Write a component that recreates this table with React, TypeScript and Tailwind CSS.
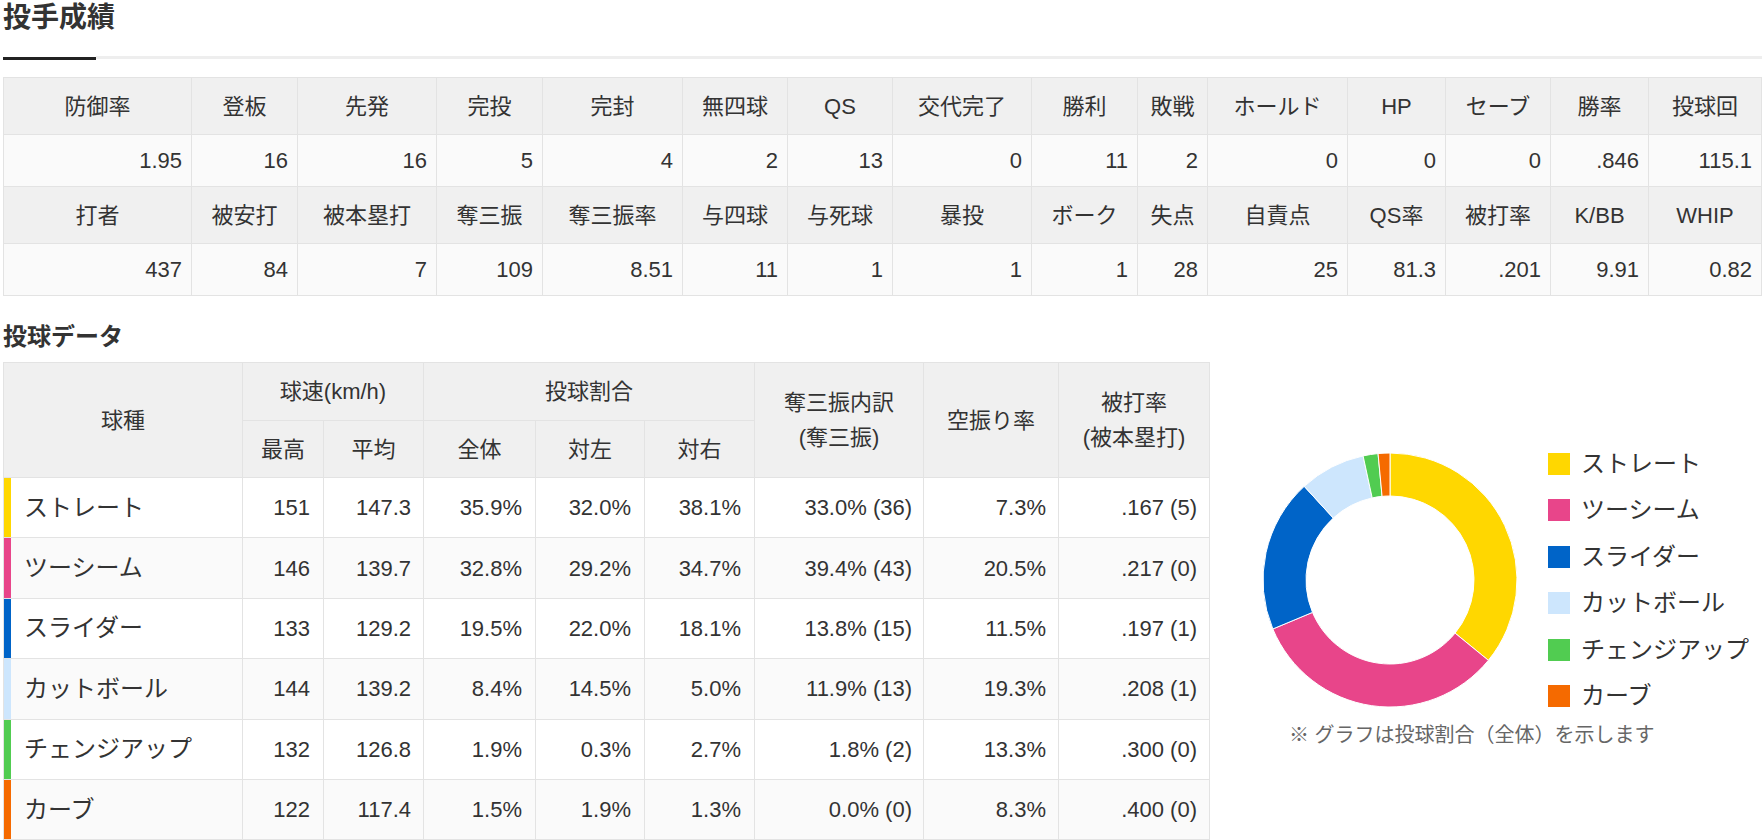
import React from "react";

type Pitch = {
  name: string;
  color: string;
  bar: string;
  max: string;
  avg: string;
  all: string;
  left: string;
  right: string;
  k: string;
  swing: string;
  avgAgainst: string;
  pct: number;
};

const pitches: Pitch[] = [
  { name: "ストレート", color: "#ffd700", bar: "shadow-[inset_7px_0_0_#ffd700]", max: "151", avg: "147.3", all: "35.9%", left: "32.0%", right: "38.1%", k: "33.0% (36)", swing: "7.3%", avgAgainst: ".167 (5)", pct: 35.9 },
  { name: "ツーシーム", color: "#e8458a", bar: "shadow-[inset_7px_0_0_#e8458a]", max: "146", avg: "139.7", all: "32.8%", left: "29.2%", right: "34.7%", k: "39.4% (43)", swing: "20.5%", avgAgainst: ".217 (0)", pct: 32.8 },
  { name: "スライダー", color: "#0064c8", bar: "shadow-[inset_7px_0_0_#0064c8]", max: "133", avg: "129.2", all: "19.5%", left: "22.0%", right: "18.1%", k: "13.8% (15)", swing: "11.5%", avgAgainst: ".197 (1)", pct: 19.5 },
  { name: "カットボール", color: "#cde6fd", bar: "shadow-[inset_7px_0_0_#cde6fd]", max: "144", avg: "139.2", all: "8.4%", left: "14.5%", right: "5.0%", k: "11.9% (13)", swing: "19.3%", avgAgainst: ".208 (1)", pct: 8.4 },
  { name: "チェンジアップ", color: "#51cc51", bar: "shadow-[inset_7px_0_0_#51cc51]", max: "132", avg: "126.8", all: "1.9%", left: "0.3%", right: "2.7%", k: "1.8% (2)", swing: "13.3%", avgAgainst: ".300 (0)", pct: 1.9 },
  { name: "カーブ", color: "#f56a00", bar: "shadow-[inset_7px_0_0_#f56a00]", max: "122", avg: "117.4", all: "1.5%", left: "1.9%", right: "1.3%", k: "0.0% (0)", swing: "8.3%", avgAgainst: ".400 (0)", pct: 1.5 },
];

const statCols = ["w-[188px]", "w-[106px]", "w-[139px]", "w-[106px]", "w-[140px]", "w-[105px]", "w-[105px]", "w-[139px]", "w-[106px]", "w-[70px]", "w-[140px]", "w-[98px]", "w-[105px]", "w-[98px]", "w-[113px]"];

const statRows: { labels: string[]; values: string[] }[] = [
  {
    labels: ["防御率", "登板", "先発", "完投", "完封", "無四球", "QS", "交代完了", "勝利", "敗戦", "ホールド", "HP", "セーブ", "勝率", "投球回"],
    values: ["1.95", "16", "16", "5", "4", "2", "13", "0", "11", "2", "0", "0", "0", ".846", "115.1"],
  },
  {
    labels: ["打者", "被安打", "被本塁打", "奪三振", "奪三振率", "与四球", "与死球", "暴投", "ボーク", "失点", "自責点", "QS率", "被打率", "K/BB", "WHIP"],
    values: ["437", "84", "7", "109", "8.51", "11", "1", "1", "1", "28", "25", "81.3", ".201", "9.91", "0.82"],
  },
];

function Donut() {
  const cx = 128;
  const cy = 128;
  const r1 = 127;
  const r0 = 84;
  let acc = 0;
  const pt = (f: number, r: number) => {
    const a = f * Math.PI * 2 - Math.PI / 2;
    return `${(cx + r * Math.cos(a)).toFixed(2)} ${(cy + r * Math.sin(a)).toFixed(2)}`;
  };
  return (
    <svg width="256" height="256" viewBox="0 0 256 256">
      {pitches.map((p) => {
        const s = acc / 100;
        acc += p.pct;
        const e = acc / 100;
        const large = e - s > 0.5 ? 1 : 0;
        const d = `M ${pt(s, r1)} A ${r1} ${r1} 0 ${large} 1 ${pt(e, r1)} L ${pt(e, r0)} A ${r0} ${r0} 0 ${large} 0 ${pt(s, r0)} Z`;
        return <path key={p.name} d={d} fill={p.color} stroke="#fff" strokeWidth="1" />;
      })}
    </svg>
  );
}

export default function App() {
  const th = "border border-[#e3e3e3] bg-[#f0f0f0] font-normal text-center";
  const td = "border border-[#e3e3e3] text-right";

  return (
    <div className="min-h-screen bg-white pl-[3px] text-[#333] font-['Liberation_Sans','Noto_Sans_CJK_JP',sans-serif]">
      <h2 className="text-[28px] leading-[36px] font-bold">投手成績</h2>
      <div className="mt-[20px] flex items-start">
        <div className="h-[3px] w-[93px] translate-y-[1px] bg-[#222]" />
        <div className="h-[3px] flex-1 bg-[#eeeeee]" />
      </div>

      <table className="mt-[18px] w-[1758px] table-fixed border-collapse text-[22px]">
        <colgroup>
          {statCols.map((c, i) => (
            <col key={i} className={c} />
          ))}
        </colgroup>
        <tbody>
          {statRows.map((row, ri) => (
            <React.Fragment key={ri}>
              <tr className="h-[57px]">
                {row.labels.map((l) => (
                  <th key={l} className={th}>
                    {l}
                  </th>
                ))}
              </tr>
              <tr className="h-[52px] bg-[#fafafa]">
                {row.values.map((v, i) => (
                  <td key={i} className={`${td} pr-[9px]`}>
                    {v}
                  </td>
                ))}
              </tr>
            </React.Fragment>
          ))}
        </tbody>
      </table>

      <h3 className="mt-[25px] text-[24px] leading-[32px] font-bold">投球データ</h3>

      <div className="mt-[9px] flex items-start">
        <table className="w-[1206px] shrink-0 table-fixed border-collapse text-[22px]">
          <colgroup>
            <col className="w-[239px]" />
            <col className="w-[81px]" />
            <col className="w-[100px]" />
            <col className="w-[112px]" />
            <col className="w-[109px]" />
            <col className="w-[110px]" />
            <col className="w-[169px]" />
            <col className="w-[135px]" />
            <col className="w-[151px]" />
          </colgroup>
          <thead>
            <tr className="h-[58px]">
              <th rowSpan={2} className={th}>球種</th>
              <th colSpan={2} className={th}>球速(km/h)</th>
              <th colSpan={3} className={th}>投球割合</th>
              <th rowSpan={2} className={`${th} leading-[35px]`}>
                奪三振内訳
                <br />
                (奪三振)
              </th>
              <th rowSpan={2} className={th}>空振り率</th>
              <th rowSpan={2} className={`${th} leading-[35px]`}>
                被打率
                <br />
                (被本塁打)
              </th>
            </tr>
            <tr className="h-[57px]">
              <th className={th}>最高</th>
              <th className={th}>平均</th>
              <th className={th}>全体</th>
              <th className={th}>対左</th>
              <th className={th}>対右</th>
            </tr>
          </thead>
          <tbody>
            {pitches.map((p, i) => (
              <tr key={p.name} className={`h-[60.4px] ${i % 2 === 1 ? "bg-[#fafafa]" : "bg-white"}`}>
                <td className={`border border-[#e3e3e3] pl-[20px] text-left text-[24px] ${p.bar}`}>{p.name}</td>
                <td className={`${td} pr-[13px]`}>{p.max}</td>
                <td className={`${td} pr-[12px]`}>{p.avg}</td>
                <td className={`${td} pr-[13px]`}>{p.all}</td>
                <td className={`${td} pr-[13px]`}>{p.left}</td>
                <td className={`${td} pr-[13px]`}>{p.right}</td>
                <td className={`${td} pr-[11px]`}>{p.k}</td>
                <td className={`${td} pr-[12px]`}>{p.swing}</td>
                <td className={`${td} pr-[12px]`}>{p.avgAgainst}</td>
              </tr>
            ))}
          </tbody>
        </table>

        <div className="flex flex-1 flex-col pt-[90px]">
          <div className="flex items-center pl-[52px]">
            <Donut />
            <div className="ml-[30px] flex flex-col gap-[24.5px]">
              {pitches.map((p) => (
                <div key={p.name} className="flex h-[22px] items-center">
                  <span className="h-[22px] w-[22px] shrink-0" style={{ backgroundColor: p.color }} />
                  <span className="ml-[11px] text-[24px] leading-none whitespace-nowrap">{p.name}</span>
                </div>
              ))}
            </div>
          </div>
          <p className="ml-[79px] mt-[13px] text-[20px] leading-[28px] text-[#666] whitespace-nowrap">
            ※ グラフは投球割合（全体）を示します
          </p>
        </div>
      </div>
    </div>
  );
}
